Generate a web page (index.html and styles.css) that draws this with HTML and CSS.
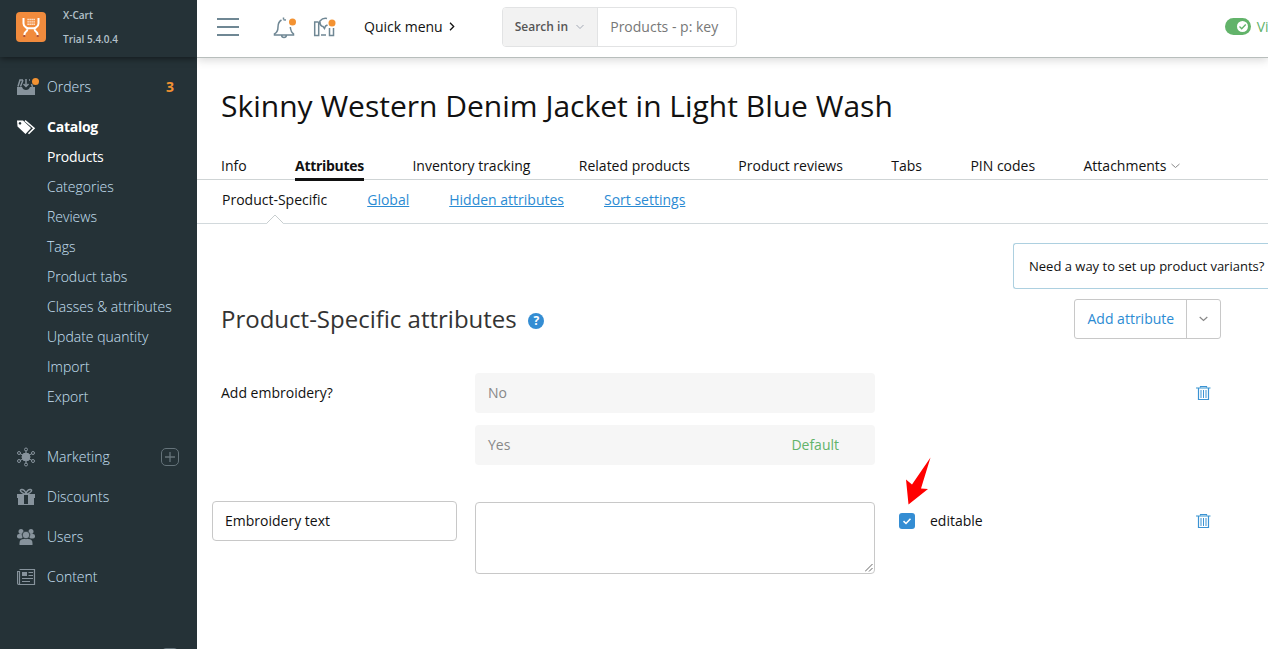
FILE: index.html
```html
<!DOCTYPE html>
<html lang="en">
<head>
<meta charset="utf-8">
<title>Skinny Western Denim Jacket in Light Blue Wash</title>
<link rel="stylesheet" href="styles.css">
</head>
<body>
<div class="app">
  <aside class="sidebar">
    <div class="brand">
      <svg class="logo" width="30" height="30" viewBox="0 0 30 30"><rect width="30" height="30" rx="4" fill="#f18b3d"/><path d="M7.500 6v5.500q0 2 2 3.500 1 1.200 3 1.200h5q2 0 3-1.200 2-1.500 2-3.500V6M8.300 23.500q0-2.500 1.500-3.700 1.700-1.300 1.700-3.300M21.700 23.500q0-2.500-1.500-3.700-1.700-1.300-1.700-3.300" fill="none" stroke="#fff" stroke-width="2"/><path d="M11.500 7.500h7.200M11.500 9.900h7.200M11.500 12.300h7.200" stroke="#fff" stroke-width="1.400" stroke-dasharray="1.200 .8"/><path d="M7.300 23h2v2h-2zM20.700 23h2v2h-2z" fill="#ad533b"/></svg>
      <div class="brand-text"><span>X-Cart</span><span>Trial 5.4.0.4</span></div>
    </div>
    <nav class="menu">
      <a class="item"><svg class="icon" width="22" height="20" viewBox="0 0 22 20"><path d="M0 10h5q1 3 4 3t4-3h5v8H0z" fill="#87939c"/><path d="M1 9.500L3 3h3M6 3l-2.500 6.500M12 3h1M14.500 7l1 3" fill="none" stroke="#87939c" stroke-width="1.500"/><path d="M9 2v7M6.500 7L9 9.500 11.500 7" fill="none" stroke="#87939c" stroke-width="1.500"/><circle cx="18.500" cy="4.500" r="3.500" fill="#f39232"/></svg><span>Orders</span><b class="count">3</b></a>
      <a class="item current"><svg class="icon" width="22" height="20" viewBox="0 0 22 20"><path fill-rule="evenodd" d="M0 3.500h6l8 7.500-5.500 6L.500 9.500zM3 5a1.300 1.300 0 1 0 .01 0z" fill="#fff"/><path d="M8 3.700l9 7.500-5.500 5.500" fill="none" stroke="#fff" stroke-width="1.600"/></svg><span>Catalog</span></a>
      <div class="submenu"><a class="active">Products</a><a>Categories</a><a>Reviews</a><a>Tags</a><a>Product tabs</a><a>Classes &amp; attributes</a><a>Update quantity</a><a>Import</a><a>Export</a></div>
      <a class="item"><svg class="icon" width="22" height="20" viewBox="0 0 22 20"><g stroke="#87939c" fill="none"><circle cx="9" cy="10" r="4" fill="#87939c"/><path d="M9 3v14M3 6.500l12 7M3 13.500l12-7"/><circle cx="9" cy="2.500" r="1.500"/><circle cx="9" cy="17.500" r="1.500"/><circle cx="2" cy="6" r="1.500"/><circle cx="16" cy="6" r="1.500"/><circle cx="2" cy="14" r="1.500"/><circle cx="16" cy="14" r="1.500"/></g></svg><span>Marketing</span><svg class="plus" width="18" height="18" viewBox="0 0 18 18"><rect x=".5" y=".5" width="17" height="17" rx="4.500" fill="none" stroke="#65737a"/><path d="M4 9h10M9 4v10" stroke="#65737a" stroke-width="1.300"/></svg></a>
      <a class="item"><svg class="icon" width="22" height="20" viewBox="0 0 22 20"><path d="M0 7h18v4h-1v7H1v-7H0z" fill="#87939c"/><path d="M7 8h4v9H7z" fill="#253237"/><path d="M9 6Q7 2 4.500 2.500T5 5.500 9 6zM9 6q2-4 4.500-3.500T13 5.500 9 6z" fill="none" stroke="#87939c" stroke-width="1.500"/></svg><span>Discounts</span></a>
      <a class="item"><svg class="icon" width="22" height="20" viewBox="0 0 22 20"><g fill="#87939c"><circle cx="4" cy="4.500" r="2.500"/><circle cx="14" cy="4.500" r="2.500"/><rect y="7" width="6" height="4.500" rx="2"/><rect x="12" y="7" width="6" height="4.500" rx="2"/><path d="M2.500 18v-2q0-4 4.500-4h4q4.500 0 4.500 4v2z"/><circle cx="9" cy="8" r="3.800" stroke="#253237" stroke-width=".8"/></g></svg><span>Users</span></a>
      <a class="item"><svg class="icon" width="22" height="20" viewBox="0 0 22 20"><path d="M2.500 2.500h15v15H2q-1.500 0-1.500-2v-11h2v13" fill="none" stroke="#87939c" stroke-width="1.200"/><path d="M5 5h5v4H5z" fill="#87939c"/><path d="M11.500 5.500H16M11.500 8.500H16M5 11.500h11M5 14.500h8" stroke="#87939c" stroke-width="1.200"/></svg><span>Content</span></a>
      <div class="menu-end"><svg class="plus" width="18" height="18" viewBox="0 0 18 18"><rect x=".5" y=".5" width="17" height="17" rx="4.500" fill="none" stroke="#65737a"/></svg></div>
    </nav>
  </aside>
  <main class="main">
    <header class="topbar">
      <svg class="burger" width="22" height="20" viewBox="0 0 22 20"><path d="M0 2h22M0 10h22M0 18h22" stroke="#6f8794" stroke-width="2"/></svg>
      <svg class="bell" width="24" height="24" viewBox="0 0 24 24"><path d="M10.500 2.500v2M13 5l-2.500-.300M8.500 5Q5 7 5 12q0 5-3.500 6.800V20h19v-1.200Q17.800 17 17.300 12M8.500 20q.2 2.500 2.500 2.500t2.500-2.500" fill="none" stroke="#6f8794" stroke-width="1.500"/><circle cx="19.500" cy="7" r="3.500" fill="#f39232"/></svg>
      <svg class="news" width="24" height="24" viewBox="0 0 24 24"><path d="M5 7H1.700v13.500h4V6.500M6 9l1-3q3-3.500 7-2.500M7 7q0 4 3 4.500l1.500 2 1-2.500 2-1M8 20h5M16.500 13v7.500h4V13" fill="none" stroke="#6f8794" stroke-width="1.500"/><circle cx="19" cy="8" r="3.500" fill="#f39232"/></svg>
      <span class="quick">Quick menu</span>
      <svg class="quick-arrow" width="6" height="9" viewBox="0 0 6 9"><path d="M1 .8l3.700 3.700L1 8.200" fill="none" stroke="#111" stroke-width="1.300"/></svg>
      <div class="search"><div class="search-in">Search in<svg width="8" height="6" viewBox="0 0 8 6"><path d="M.5 1L4 4.500 7.500 1" fill="none" stroke="#a3a9b5"/></svg></div><div class="search-text">Products - p: key</div></div>
      <div class="view"><svg width="26" height="17" viewBox="0 0 26 17"><rect width="26" height="17" rx="8.500" fill="#62b36a"/><circle cx="17.500" cy="8.500" r="5.500" fill="#fff"/><path d="M14.500 8.500l2.200 2.200 4-4.200" fill="none" stroke="#62b36a" stroke-width="1.300"/></svg><span>View storefront</span></div>
    </header>
    <h1>Skinny Western Denim Jacket in Light Blue Wash</h1>
    <nav class="tabs"><a>Info</a><a class="selected">Attributes</a><a>Inventory tracking</a><a>Related products</a><a>Product reviews</a><a>Tabs</a><a>PIN codes</a><a>Attachments<svg width="9" height="6" viewBox="0 0 9 6"><path d="M.5 1l4 3.500 4-3.500" fill="none" stroke="#888"/></svg></a></nav>
    <nav class="subtabs"><span class="here">Product-Specific<svg class="notch" width="18" height="10" viewBox="0 0 18 10"><path d="M1 9.500L9 1l8 8.500V10H1z" fill="#fff"/><path d="M1 9l8-8 8 8" fill="none" stroke="#c8cecf"/></svg></span><a>Global</a><a>Hidden attributes</a><a>Sort settings</a></nav>
    <div class="hint-line"><div class="hint">Need a way to set up product variants?</div></div>
    <div class="section-head">
      <h2>Product-Specific attributes</h2><i class="help">?</i>
      <div class="add"><span>Add attribute</span><span class="drop"><svg width="9" height="6" viewBox="0 0 9 6"><path d="M.7 1l3.800 3.500L8.300 1" fill="none" stroke="#888" stroke-width="1.200"/></svg></span></div>
    </div>
    <div class="attribute">
      <div class="label">Add embroidery?</div>
      <div class="values"><div class="value">No</div><div class="value">Yes<em>Default</em></div></div>
      <svg class="trash" width="15" height="16" viewBox="0 0 15 16"><path d="M0 3h14.500" stroke="#7ab8df" stroke-width="1.500"/><path d="M4.500 2.500v-1h6v1M2.500 3v11.500h10V3" fill="none" stroke="#3b93d3" stroke-width="1.200"/><path d="M5 5v8M7.500 5v8M10 5v8" stroke="#3b93d3"/></svg>
    </div>
    <div class="attribute text-attribute">
      <div class="name"><span>Embroidery text</span></div>
      <div class="textarea"><svg width="8" height="8" viewBox="0 0 8 8"><path d="M0 7.500L7.500 0M4 7.500L7.500 4" stroke="#555" stroke-width=".9"/></svg></div>
      <svg class="check" width="16" height="16" viewBox="0 0 16 16"><rect width="16" height="16" rx="3" fill="#348dd3"/><path d="M4.500 8.200L7 10.500l4.500-4.700" fill="none" stroke="#fff" stroke-width="1.600"/></svg>
      <span class="editable">editable</span>
      <svg class="trash" width="15" height="16" viewBox="0 0 15 16"><path d="M0 3h14.500" stroke="#7ab8df" stroke-width="1.500"/><path d="M4.500 2.500v-1h6v1M2.500 3v11.500h10V3" fill="none" stroke="#3b93d3" stroke-width="1.200"/><path d="M5 5v8M7.500 5v8M10 5v8" stroke="#3b93d3"/></svg>
    </div>
  </main>
</div>
<svg class="pointer" width="26" height="50" viewBox="0 0 26 50"><path d="M25.500.500L7 27.500 1 22.500 3.500 47.500 23 32l-7-.500z" fill="#f00"/></svg>
</body>
</html>
```
FILE: styles.css
```css
* { box-sizing: border-box; }
body { margin: 0; overflow: hidden; background: #fff; font: 14px/20px "Open Sans", sans-serif; color: #111; }
svg { display: block; flex-shrink: 0; }
h1, h2 { margin: 0; font-weight: 400; }
.app { display: flex; height: 649px; }
.sidebar { width: 197px; flex-shrink: 0; background: #253237; color: #c9e1f6; overflow: hidden; }
.brand { display: flex; height: 57px; padding: 12px 16px 0; box-shadow: 0 1px 7px rgba(0,0,0,.55); }
.brand-text { display: flex; flex-direction: column; margin: -9px 0 0 17px; font-size: 10px; line-height: 24px; font-weight: 600; color: #b4c1ca; }
.menu { padding-top: 10px; font-weight: 300; }
.item { display: flex; align-items: center; height: 40px; padding: 0 23px 0 17px; }
.icon { margin-right: 8px; }
.count { margin-left: auto; color: #f39232; font-weight: 700; }
.current { color: #fff; font-weight: 700; }
.current span { letter-spacing: -.25px; }
.submenu { display: flex; flex-direction: column; margin-top: -5px; padding: 0 0 25px 47px; }
.submenu a { height: 30px; line-height: 30px; }
.submenu .active { color: #fff; font-weight: 400; letter-spacing: -.2px; }
.item .plus { margin: 0 -5px 0 auto; }
.menu-end { display: flex; justify-content: flex-end; padding: 51px 18px 0 0; }
.main { width: 1071px; overflow: hidden; }
.topbar { display: flex; align-items: center; height: 58px; padding: 0 0 4px 20px; border-bottom: 1px solid #b8bebc; box-shadow: 0 2px 9px rgba(0,0,0,.16); white-space: nowrap; }
.topbar > * { flex-shrink: 0; }
.bell { margin-left: 34px; }
.news { margin-left: 16px; }
.quick { margin-left: 27px; }
.quick-arrow { margin: 0 0 0 6px; }
.search { display: flex; width: 235px; height: 40px; margin-left: 47px; border: 1px solid #e2e3e4; border-radius: 4px; line-height: 38px; overflow: hidden; }
.search-in { display: flex; align-items: center; gap: 8px; width: 95px; padding-left: 12px; background: #f2f2f2; border-right: 1px solid #e2e3e4; font-size: 12px; font-weight: 600; color: #555; }
.search-text { padding-left: 12.500px; color: #777; }
.view { display: flex; align-items: center; gap: 6px; margin-left: 488px; color: #62b36a; }
h1 { height: 95px; padding: 24px 0 0 24px; font-size: 30px; line-height: 48px; white-space: nowrap; }
.tabs { display: flex; gap: 48.400px; height: 27px; padding-left: 24px; border-bottom: 1px solid #cfd4d5; line-height: 26px; white-space: nowrap; }
.tabs a { display: flex; align-items: center; gap: 4px; height: 28px; padding-bottom: 3px; }
.tabs .selected { width: 69px; border-bottom: 3px solid #111; font-weight: 700; letter-spacing: -.3px; padding-bottom: 0; }
.subtabs { display: flex; gap: 40px; height: 44px; padding-left: 25px; border-bottom: 1px solid #d2d9dc; line-height: 40px; }
.subtabs a { color: #2b8bd3; text-decoration: underline; }
.here { position: relative; }
.notch { position: absolute; left: 44px; top: 34px; }
.hint-line { display: flex; justify-content: flex-end; padding-top: 19px; }
.hint { width: 255px; height: 46px; padding-left: 15px; border: 1px solid #add0e0; border-right: 0; border-radius: 3px 0 0 3px; font-size: 13px; line-height: 44px; white-space: nowrap; }
.section-head { display: flex; align-items: center; padding: 10px 47px 0 24px; }
h2 { font-size: 24px; line-height: 40px; color: #333; }
.help { width: 16px; height: 16px; margin: 4px 0 0 11.500px; border-radius: 50%; background: #348dd3; color: #fff; font: bold 12px/16px "Open Sans", sans-serif; text-align: center; }
.add { display: flex; width: 147px; height: 40px; margin-left: auto; border: 1px solid #c8c8c8; border-radius: 3px; line-height: 38px; color: #2b8bd3; }
.add span:first-child { flex: 1; padding-left: 12.500px; white-space: nowrap; }
.add .drop { display: flex; align-items: center; justify-content: center; width: 34px; border-left: 1px solid #c8c8c8; }
.attribute { display: flex; padding: 34px 57px 0 24px; }
.label { width: 254px; line-height: 40px; }
.values { display: flex; flex-direction: column; gap: 12px; width: 400px; }
.value { display: flex; justify-content: space-between; height: 40px; padding: 0 36px 0 13px; border-radius: 4px; background: #f6f6f6; line-height: 40px; color: #888; }
.value em { color: #62b36a; font-style: normal; }
.trash { margin: 12px 0 0 auto; }
.text-attribute { padding: 36px 57px 0 15px; }
.name { width: 245px; height: 40px; margin-right: 18px; padding-left: 12px; border: 1px solid #c8c8c8; border-radius: 4px; line-height: 38px; }
.textarea { display: flex; align-items: flex-end; justify-content: flex-end; width: 400px; height: 72px; margin-top: 1px; padding: 1px; border: 1px solid #c8c8c8; border-radius: 4px; }
.check { margin: 12px 15px 0 24px; }
.editable { line-height: 40px; }
.pointer { position: absolute; left: 905px; top: 457px; }
```
